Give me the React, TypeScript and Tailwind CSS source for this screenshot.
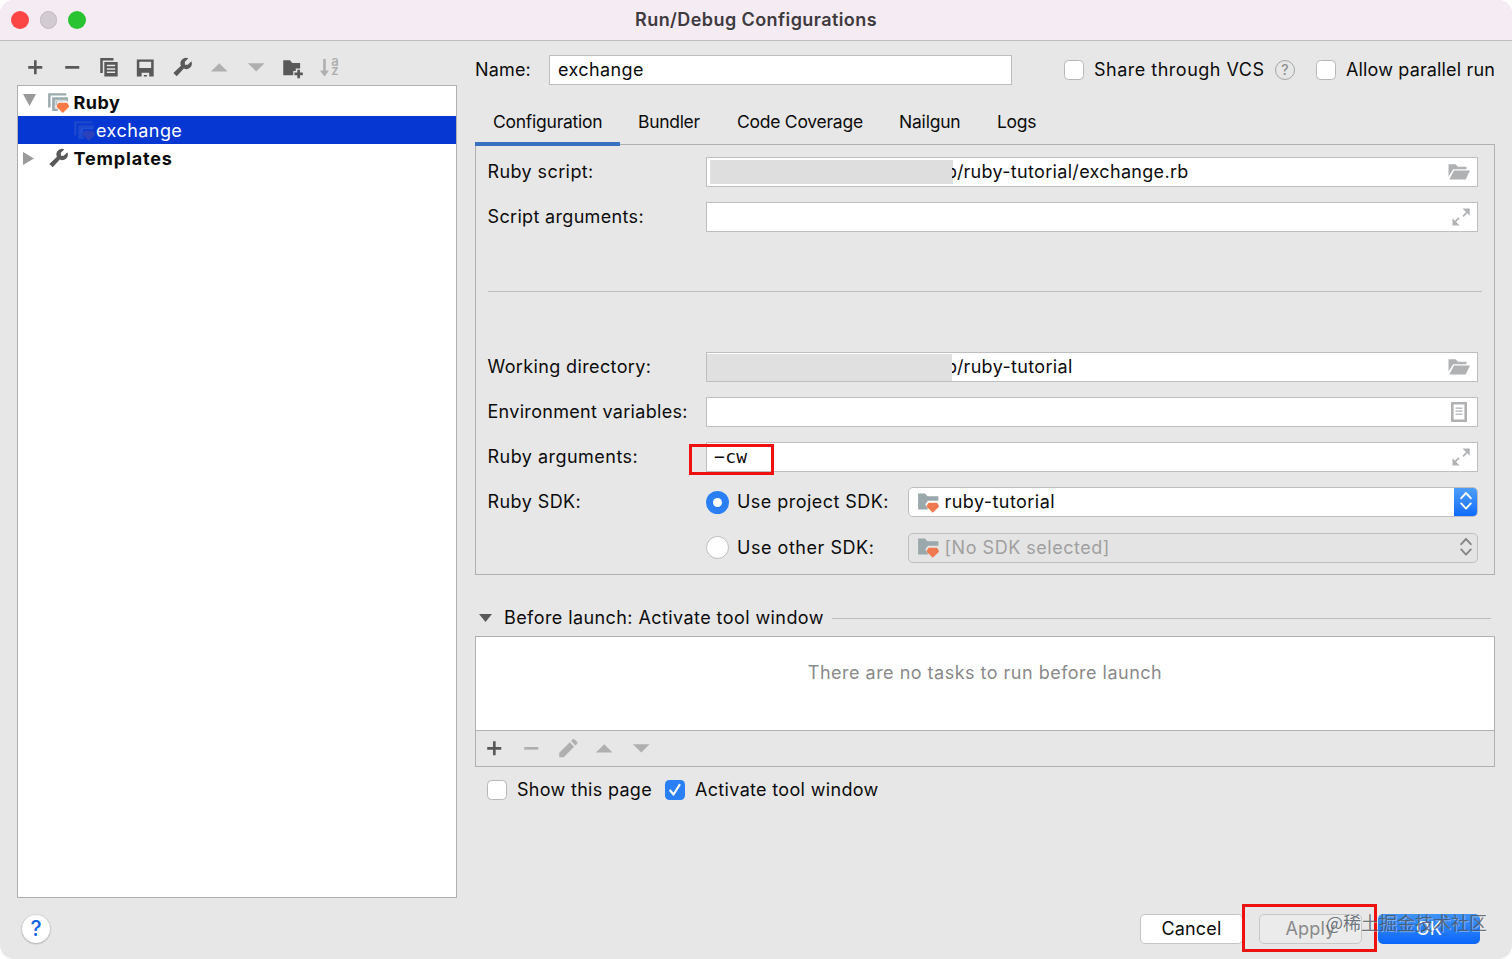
import React from 'react';

type IconProps = { className?: string };

const AddIcon = ({ className = 'text-[#595959]' }: IconProps) => (
  <svg viewBox="0 0 16 16" className={`size-[22.5px] ${className}`} fill="currentColor">
    <path d="M7.1 3h1.9v4.1H13V9H9v4H7.1V9H3V7.1h4.1z" />
  </svg>
);

const RemoveIcon = ({ className = 'text-[#595959]' }: IconProps) => (
  <svg viewBox="0 0 16 16" className={`size-[22.5px] ${className}`} fill="currentColor">
    <path d="M3 7.1h10V9H3z" />
  </svg>
);

const CopyIcon = () => (
  <svg viewBox="0 0 16 16" className="size-[22.5px] text-[#595959]" fill="currentColor" fillRule="evenodd">
    <path d="M1.6 1.4h9.4v1.8H3.4V12H1.600z" />
    <path d="M4.500 4.200H14v10.400H4.500zM6.300 6.300v1h5.900v-1zM6.300 8.700v1h5.900v-1zM6.300 11.100v1h5.900v-1z" />
  </svg>
);

const SaveIcon = () => (
  <svg viewBox="0 0 16 16" className="size-[22.5px] text-[#595959]" fill="currentColor" fillRule="evenodd">
    <path d="M2 2.400h12v12.200H2zM3.800 4.100v4.400h8.400V4.100zM5.400 11.900v2.700h1.600v-1.100h2.200v1.100h1.600v-2.700z" />
  </svg>
);

const WrenchIcon = () => (
  <svg viewBox="0 0 24 24" className="size-[22.5px] text-[#595959]" fill="currentColor">
    <path d="M14.8 6.2v3h3.1l3.8-3.7a6 6 0 0 1-8 7.9l-7.6 8.2-3.6-3.6 8.1-7.6a6 6 0 0 1 7.9-8z" />
  </svg>
);

const UpIcon = () => (
  <svg viewBox="0 0 16 16" className="size-[22.5px] text-[#afafaf]" fill="currentColor">
    <path d="M8 5.1l5.9 6H2.1z" />
  </svg>
);

const DownIcon = () => (
  <svg viewBox="0 0 16 16" className="size-[22.5px] text-[#afafaf]" fill="currentColor">
    <path d="M8 11.1l5.9-6H2.1z" />
  </svg>
);

const NewFolderIcon = () => (
  <svg viewBox="0 0 16 16" className="size-[22.5px] text-[#595959]" fill="currentColor">
    <path d="M1.600 3h4.800l1.600 1.900h5.600v4h-3.100v1.700H8.700v3H1.600z" />
    <path d="M11.600 9.700h1.900v2.100h2v1.900h-2v2.100h-1.900v-2.100h-2v-1.900h2z" />
  </svg>
);

const SortIcon = () => (
  <span className="flex items-center text-[#afafaf]">
    <svg viewBox="0 0 9 18" className="h-[18px] w-[9px]" fill="currentColor">
      <path d="M3.200 0h2.600v11.500H9L4.500 17.500 0 11.500h3.200z" />
    </svg>
    <span className="-mt-1 ml-[2px] grid grid-rows-[9px_9px] text-[13px] leading-[9px] font-semibold">
      <span>a</span>
      <span>z</span>
    </span>
  </span>
);

const PencilIcon = () => (
  <svg viewBox="0 0 16 16" className="size-[22.5px] text-[#afafaf]" fill="currentColor">
    <path d="M1.600 11.200l7.500-7.400 3.100 3.100-7.400 7.500H1.600zM10 2.900l1-1.100c.5-.5 1.200-.5 1.700 0l1.500 1.500c.5.5.5 1.200 0 1.700l-1.100 1z" />
  </svg>
);

const RubyConfigIcon = ({ className = '' }: IconProps) => (
  <svg viewBox="0 0 16 16" className={`size-[22.5px] ${className}`}>
    <path d="M.8 1.600h12.900v1.600H2.500v8.600H.8z" fill="#9aa9ad" />
    <path d="M3.700 4.500h11.200v2.800h-7.600v2.900h-1.200v2.300h1.500v1.800H3.700z" fill="#9aa9ad" />
    <path d="M5.500 6.200h8.400v.9H6.800v5.600H5.500z" fill="#fff" fillOpacity=".55" />
    <path d="M8.200 8.400h6.100l1.300 2v1l-4.400 4.200-4.300-4.200v-1z" fill="#f97a45" />
  </svg>
);

const RubyFolderIcon = () => (
  <svg viewBox="0 0 16 16" className="size-[22.5px]">
    <path d="M.8 1.800h4.900l1.700 1.900h7.800v3.300H7.800L5.900 9.500l2.100 3.600H.8z" fill="#9aa7ab" />
    <path d="M8.300 8.300h5.900l1.300 2v1l-4.300 4.200-4.200-4.200v-1z" fill="#f07a50" />
  </svg>
);

const FolderOpenIcon = () => (
  <svg viewBox="0 0 24 18" className="h-[18px] w-6" fill="#afb1b3">
    <path d="M1.500 1.200h7L11 3.800h8.500v2.400H6.200L1.500 13.600z" />
    <path d="M7 7.600h16l-4.300 8.900H2.300z" />
  </svg>
);

const ExpandIcon = () => (
  <svg viewBox="0 0 20 20" className="mb-px size-5" fill="#afb1b3">
    <path d="M11.500 1.500h7.200v7.200l-2.400-2.400-3.600 3.600-1.200-1.200 3.600-3.600z" />
    <path d="M8.700 18.500H1.500v-7.200l2.400 2.400 3.500-3.500 1.200 1.200-3.500 3.500z" />
  </svg>
);

const ListIcon = () => (
  <svg viewBox="0 0 18 20" className="mb-px h-5 w-[18px]" fill="#afb1b3" fillRule="evenodd">
    <path d="M1 0h16v20H1zM3.600 2.600v14.800h10.800V2.600z" />
    <path d="M5.500 5.500h7v1.300h-7zM5.500 8.500h7v1.300h-7zM5.500 11.500h7v1.300h-7z" />
  </svg>
);

const Chevrons = ({ className = '' }: IconProps) => (
  <svg viewBox="0 0 14 20" className={`h-5 w-3.5 ${className}`} fill="none" stroke="currentColor" strokeWidth="1.900" strokeLinecap="round" strokeLinejoin="round">
    <path d="M2.200 7.200L7 2l4.800 5.200M2.200 12.400L7 17.600l4.800-5.200" />
  </svg>
);

const Checkbox = ({ checked = false }: { checked?: boolean }) =>
  checked ? (
    <span className="flex size-5 shrink-0 items-center justify-center rounded-[4.5px] bg-[#2a7ff6]">
      <svg viewBox="0 0 20 20" className="size-5" fill="none" stroke="#fff" strokeWidth="2.200" strokeLinecap="round" strokeLinejoin="round">
        <path d="M5.200 10.500L8.500 14.500l6-9.500" />
      </svg>
    </span>
  ) : (
    <span className="size-5 shrink-0 rounded-[4.5px] border border-[#b8b8b8] bg-white" />
  );

const FieldRow = ({ label, tracking, children }: { label: string; tracking: string; children: React.ReactNode }) => (
  <div className="flex h-[30px] items-center">
    <span className={`w-[218.5px] shrink-0 ${tracking}`}>{label}</span>
    {children}
  </div>
);

const fieldClass = 'flex h-[30px] flex-1 items-center border border-[#bebebe] bg-white';

const App = () => {
  return (
    <div className="h-[959px] w-[1512px] overflow-hidden bg-white">
      <div className="relative flex h-full flex-col overflow-hidden rounded-[14px] bg-[#e7e7e7] font-['Inter',sans-serif] text-[18px] leading-[28px] whitespace-nowrap text-[#0c0c0c]">
        {/* Title bar */}
        <div className="flex h-[41px] shrink-0 items-center border-b border-[#c3bec2] bg-[#f4ebf3]">
          <div className="flex w-[200px] gap-[11px] pl-[11px]">
            <span className="size-[17.5px] rounded-full bg-[#fc4645]" />
            <span className="size-[17.5px] rounded-full border border-[#bfb9be] bg-[#d2cbd1]" />
            <span className="size-[17.5px] rounded-full bg-[#29c231]" />
          </div>
          <div className="flex-1 pb-px text-center font-semibold tracking-[0.420px] text-[#3f3a3e]">
            Run/Debug Configurations
          </div>
          <div className="w-[200px]" />
        </div>

        {/* Main area */}
        <div className="flex h-[857px] shrink-0 pl-[17px]">
          {/* Configurations tree */}
          <div className="flex w-[440px] shrink-0 flex-col">
            <div className="grid h-11 shrink-0 grid-cols-[repeat(9,36.750px)] place-items-center pt-[9px]">
              <AddIcon />
              <RemoveIcon />
              <CopyIcon />
              <SaveIcon />
              <WrenchIcon />
              <UpIcon />
              <DownIcon />
              <NewFolderIcon />
              <SortIcon />
            </div>
            <div className="flex-1 border border-[#b0b0b0] bg-white pt-[2px]">
              <div className="flex h-7 items-center pl-[5px]">
                <svg viewBox="0 0 13 12" className="mb-1 h-3 w-[13px]" fill="#9a9a9a">
                  <path d="M0 0h13L6.500 12z" />
                </svg>
                <RubyConfigIcon className="ml-[11px]" />
                <span className="mt-px ml-[4px] font-bold tracking-[0.500px]">Ruby</span>
              </div>
              <div className="flex h-7 items-center bg-[#0637d2] pl-[55px] text-white">
                <RubyConfigIcon className="opacity-15" />
                <span className="mt-px ml-[0.500px] tracking-[0.450px]">exchange</span>
              </div>
              <div className="flex h-7 items-center pl-[5px]">
                <svg viewBox="0 0 11 13" className="mr-[2px] h-[13px] w-[11px]" fill="#9a9a9a">
                  <path d="M0 0l11 6.500L0 13z" />
                </svg>
                <span className="ml-[11px]"><WrenchIcon /></span>
                <span className="mt-px ml-[4px] font-bold tracking-[0.830px]">Templates</span>
              </div>
            </div>
          </div>

          {/* Settings */}
          <div className="ml-[18px] flex w-[1020px] shrink-0 flex-col">
            <div className="mt-[14px] flex h-[30px] items-center">
              <span className="w-[74px] shrink-0 tracking-[0.150px]">Name:</span>
              <div className="flex h-[30px] w-[463px] shrink-0 items-center border border-[#bebebe] bg-white pl-2 tracking-[0.380px]">exchange</div>
              <div className="flex flex-1 items-center pl-[52px]">
                <Checkbox />
                <span className="ml-[10px] w-[181px] shrink-0 tracking-[0.500px]">Share through VCS</span>
                <span className="flex size-5 shrink-0 items-center justify-center rounded-full border-[1.5px] border-[#a2a6a8] text-[14px] font-medium text-[#8c9092]">?</span>
                <span className="ml-[21px] flex"><Checkbox /></span>
                <span className="ml-[10px] w-[149px] tracking-[0.150px]">Allow parallel run</span>
              </div>
            </div>

            {/* Tabs */}
            <div className="mt-3 flex h-12 items-stretch text-[17.500px] leading-[49px]">
              <div className="relative z-10 -mb-px w-[145px] border-b-4 border-[#3871c2] pl-[18px] tracking-[-0.250px]">Configuration</div>
              <div className="w-[99px] pl-[18px] tracking-[-0.300px]">Bundler</div>
              <div className="w-[162px] pl-[18px] tracking-[-0.250px]">Code Coverage</div>
              <div className="w-[98px] pl-[18px] tracking-[-0.200px]">Nailgun</div>
              <div className="pl-[18px] tracking-[-0.300px]">Logs</div>
            </div>

            {/* Configuration tab */}
            <div className="-mt-[1px] h-[431px] border border-[#b0b0b0] pr-4 pl-[11.500px]">
              <div className="mt-3 grid gap-[15px]">
                <FieldRow label="Ruby script:" tracking="tracking-[0.400px]">
                  <div className={fieldClass}>
                    <span className="ml-[3px] h-6 w-[243px] bg-[#dedede]" />
                    <span className="-ml-px flex w-[11.500px] justify-end overflow-hidden">b/</span>
                    <span className="flex-1 tracking-[0.320px]">ruby-tutorial/exchange.rb</span>
                    <span className="mr-[6px]"><FolderOpenIcon /></span>
                  </div>
                </FieldRow>
                <FieldRow label="Script arguments:" tracking="tracking-[0.330px]">
                  <div className={`${fieldClass} justify-end pr-[6px]`}><ExpandIcon /></div>
                </FieldRow>
              </div>
              <div className="mt-[59px] mr-[-4px] h-px bg-[#bdbdbd]" />
              <div className="mt-[60px] grid gap-[15.150px]">
                <FieldRow label="Working directory:" tracking="tracking-[0.370px]">
                  <div className={fieldClass}>
                    <span className="h-[27px] w-[245px] bg-[#e0e0e0]" />
                    <span className="flex w-[11.500px] justify-end overflow-hidden">b/</span>
                    <span className="flex-1 tracking-[0.350px]">ruby-tutorial</span>
                    <span className="mr-[6px]"><FolderOpenIcon /></span>
                  </div>
                </FieldRow>
                <FieldRow label="Environment variables:" tracking="tracking-[0.300px]">
                  <div className={`${fieldClass} justify-end pr-[9px]`}><ListIcon /></div>
                </FieldRow>
                <FieldRow label="Ruby arguments:" tracking="tracking-[0.470px]">
                  <div className={`${fieldClass} justify-between pr-[6px] pl-[7px]`}>
                    <span className="flex font-['DejaVu_Sans_Mono',monospace] text-[18px] tracking-[0.300px]">−cw</span>
                    <ExpandIcon />
                  </div>
                </FieldRow>
                <FieldRow label="Ruby SDK:" tracking="tracking-[0.420px]">
                  <span className="flex size-[23px] items-center justify-center rounded-full bg-[#2a7ff6]">
                    <span className="size-[9px] rounded-full bg-white" />
                  </span>
                  <span className="ml-2 w-[171px] tracking-[0.450px]">Use project SDK:</span>
                  <div className="flex h-[30px] flex-1 items-center overflow-hidden rounded-[5px] border border-[#bebebe] bg-white pl-2">
                    <RubyFolderIcon />
                    <span className="ml-[5px] flex-1 tracking-[0.450px]">ruby-tutorial</span>
                    <span className="-mr-px flex h-[30px] w-6 items-center justify-center bg-linear-to-b from-[#4f9ffb] to-[#0a69fb] pb-[2px] text-white"><Chevrons /></span>
                  </div>
                </FieldRow>
                <FieldRow label="" tracking="">
                  <span className="size-[23px] rounded-full border border-[#bdbdbd] bg-white" />
                  <span className="ml-2 w-[171px] tracking-[0.530px]">Use other SDK:</span>
                  <div className="flex h-[30px] flex-1 items-center rounded-[5px] border border-[#bebebe] bg-[#e4e4e4] pl-2 text-[#a0a0a0]">
                    <RubyFolderIcon />
                    <span className="ml-[5px] flex-1 tracking-[0.520px]">[No SDK selected]</span>
                    <span className="mr-1 pb-[2px] text-[#858585]"><Chevrons /></span>
                  </div>
                </FieldRow>
              </div>
            </div>

            {/* Before launch */}
            <div className="mt-[29px] flex h-7 items-center pr-1 pl-1">
              <svg viewBox="0 0 13 8" className="h-2 w-[13px]" fill="#595959">
                <path d="M0 0h13L6.500 8z" />
              </svg>
              <span className="ml-3 tracking-[0.420px]">Before launch: Activate tool window</span>
              <span className="ml-2 h-px flex-1 bg-[#bdbdbd]" />
            </div>
            <div className="mt-1 h-[131px] shrink-0 border border-[#b0b0b0]">
              <div className="h-[94px] border-b border-[#b0b0b0] bg-white pt-[22px] text-center tracking-[0.490px] text-[#8a8a8a]">
                There are no tasks to run before launch
              </div>
              <div className="grid h-[35px] grid-cols-[repeat(5,36.750px)] place-items-center">
                <AddIcon />
                <RemoveIcon className="text-[#afafaf]" />
                <PencilIcon />
                <UpIcon />
                <DownIcon />
              </div>
            </div>
            <div className="mt-[9px] flex h-7 items-center pl-3">
              <Checkbox />
              <span className="ml-[10px] w-[148px] tracking-[0.300px]">Show this page</span>
              <Checkbox checked />
              <span className="ml-[10px] tracking-[0.330px]">Activate tool window</span>
            </div>
          </div>
        </div>

        {/* Footer */}
        <div className="flex flex-1 items-center pr-8 pl-[22px]">
          <span className="flex size-7 items-center justify-center rounded-full bg-white text-[21px] font-medium text-[#1262e0] shadow-[0_0.500px_2px_rgba(0,0,0,0.400)]">?</span>
          <div className="flex flex-1 justify-end gap-4 text-center">
            <div className="h-[30px] w-[103px] rounded-[5px] border border-[#c4c4c4] bg-white tracking-[0.200px]">Cancel</div>
            <div className="h-[30px] w-[103px] rounded-[5px] border border-[#c8c8c8] bg-[#ebebeb] tracking-[0.200px] text-[#8a8a8a]">Apply</div>
            <div className="h-[30px] w-[102px] rounded-[5px] bg-linear-to-b from-[#3f92f8] to-[#0a66fb] leading-[30px] text-white">OK</div>
          </div>
        </div>

        {/* Highlights and watermark */}
        <div className="absolute top-[444px] left-[689px] h-[31px] w-[85px] border-[3px] border-[#ee1110]" />
        <div className="absolute top-[904px] left-[1242px] h-[48px] w-[135px] border-[3px] border-[#ee1110]" />
        <div className="absolute top-[908px] left-[1326px] font-['Noto_Sans_CJK_SC',sans-serif] text-[18px] text-[#4c5560]/80 [text-shadow:1px_1px_0_rgba(255,255,255,0.350)]">
          @稀土掘金技术社区
        </div>
      </div>
    </div>
  );
};

export default App;
